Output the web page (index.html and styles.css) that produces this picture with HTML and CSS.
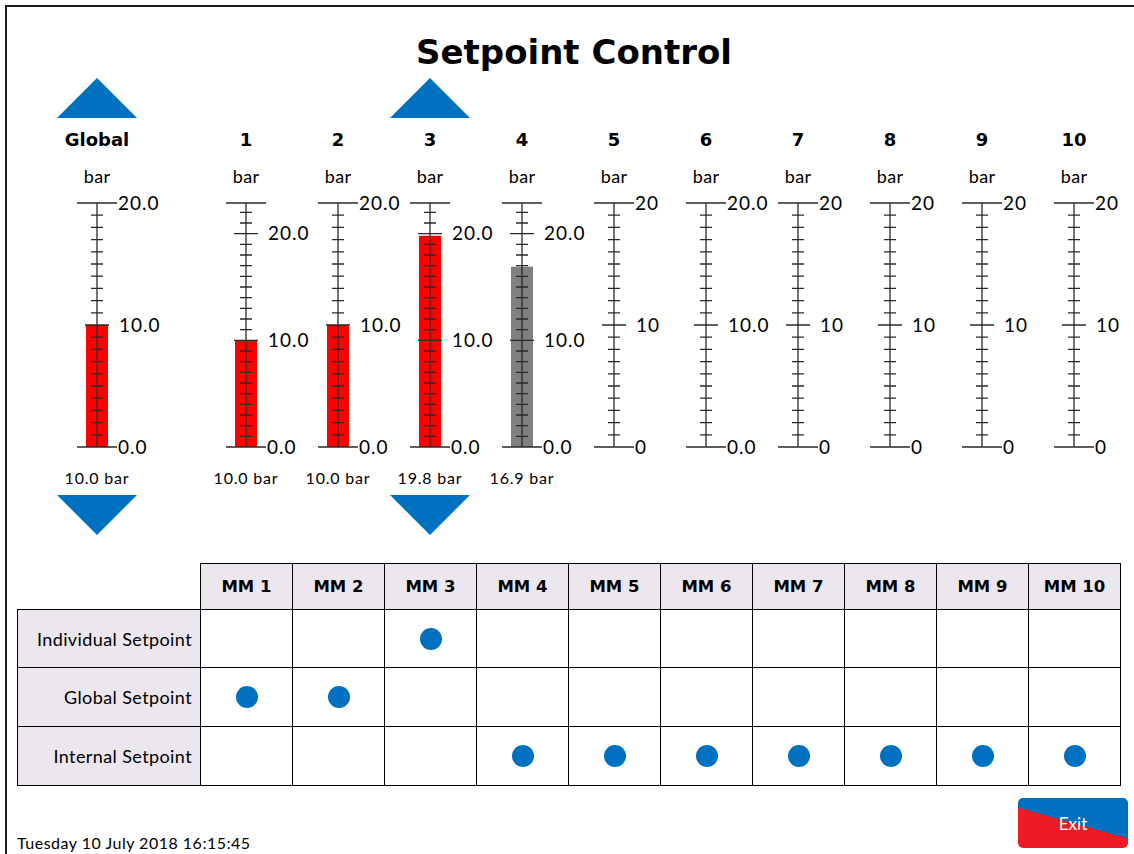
FILE: index.html
```html
<!DOCTYPE html>
<html lang="en">
<head>
<meta charset="utf-8">
<title>Setpoint Control</title>
<link rel="stylesheet" href="styles.css">
</head>
<body>
<svg class="defs" aria-hidden="true">
  <defs>
    <g id="scaleA" class="ticks">
      <path d="M40 247.8h12M40 235.6h12M40 223.4h12M40 211.2h12M40 199h12M40 186.8h12M40 174.6h12M40 162.4h12M40 150.2h12M40 125.8h12M40 113.6h12M40 101.4h12M40 89.2h12M40 77h12M40 64.8h12M40 52.6h12M40 40.4h12M40 28.2h12M34 138h24M26 16h40M26 260h40M46 16V260"/>
    </g>
    <g id="scaleB" class="ticks">
      <path d="M40 249.33h12M40 238.67h12M40 228h12M40 217.33h12M40 206.67h12M40 196h12M40 185.33h12M40 174.67h12M40 164h12M40 142.67h12M40 132h12M40 121.33h12M40 110.67h12M40 100h12M40 89.33h12M40 78.67h12M40 68h12M40 57.33h12M40 36h12M40 25.33h12M34 153.33h24M34 46.67h24M26 16h40M26 260h40M46 16V260"/>
    </g>
  </defs>
</svg>
<div class="screen">
  <h1 class="title">Setpoint Control</h1>

  <div class="gauges">
    <div class="gauge global">
      <div class="slot"><div class="tri-up"></div></div>
      <div class="name">Global</div>
      <div class="unit">bar</div>
      <svg class="scale" viewBox="0 0 92 272"><rect class="bar red" x="35" y="138" width="22" height="122"/><use href="#scaleA"/><text class="lbl" x="67" y="15">20.0</text><text class="lbl" x="68" y="137">10.0</text><text class="lbl" x="67" y="259">0.0</text></svg>
      <div class="readout">10.0 bar</div>
      <div class="slot down"><div class="tri-down"></div></div>
    </div>
    <div class="gauge">
      <div class="slot"></div>
      <div class="name">1</div>
      <div class="unit">bar</div>
      <svg class="scale" viewBox="0 0 92 272"><rect class="bar red" x="35" y="153.33" width="22" height="106.67"/><use href="#scaleB"/><text class="lbl" x="68" y="45.67">20.0</text><text class="lbl" x="68" y="152.33">10.0</text><text class="lbl" x="67" y="259">0.0</text></svg>
      <div class="readout">10.0 bar</div>
      <div class="slot down"></div>
    </div>
    <div class="gauge">
      <div class="slot"></div>
      <div class="name">2</div>
      <div class="unit">bar</div>
      <svg class="scale" viewBox="0 0 92 272"><rect class="bar red" x="35" y="138" width="22" height="122"/><use href="#scaleA"/><text class="lbl" x="67" y="15">20.0</text><text class="lbl" x="68" y="137">10.0</text><text class="lbl" x="67" y="259">0.0</text></svg>
      <div class="readout">10.0 bar</div>
      <div class="slot down"></div>
    </div>
    <div class="gauge">
      <div class="slot"><div class="tri-up"></div></div>
      <div class="name">3</div>
      <div class="unit">bar</div>
      <svg class="scale" viewBox="0 0 92 272"><rect class="bar red" x="35" y="48.8" width="22" height="211.2"/><use href="#scaleB"/><text class="lbl" x="68" y="45.67">20.0</text><text class="lbl" x="68" y="152.33">10.0</text><text class="lbl" x="67" y="259">0.0</text></svg>
      <div class="readout">19.8 bar</div>
      <div class="slot down"><div class="tri-down"></div></div>
    </div>
    <div class="gauge">
      <div class="slot"></div>
      <div class="name">4</div>
      <div class="unit">bar</div>
      <svg class="scale" viewBox="0 0 92 272"><rect class="bar grey" x="35" y="79.7" width="22" height="180.3"/><use href="#scaleB"/><text class="lbl" x="68" y="45.67">20.0</text><text class="lbl" x="68" y="152.33">10.0</text><text class="lbl" x="67" y="259">0.0</text></svg>
      <div class="readout">16.9 bar</div>
      <div class="slot down"></div>
    </div>
    <div class="gauge">
      <div class="slot"></div>
      <div class="name">5</div>
      <div class="unit">bar</div>
      <svg class="scale" viewBox="0 0 92 272"><use href="#scaleA"/><text class="lbl" x="67" y="15">20</text><text class="lbl" x="68" y="137">10</text><text class="lbl" x="67" y="259">0</text></svg>
      <div class="readout"></div>
      <div class="slot down"></div>
    </div>
    <div class="gauge">
      <div class="slot"></div>
      <div class="name">6</div>
      <div class="unit">bar</div>
      <svg class="scale" viewBox="0 0 92 272"><use href="#scaleA"/><text class="lbl" x="67" y="15">20.0</text><text class="lbl" x="68" y="137">10.0</text><text class="lbl" x="67" y="259">0.0</text></svg>
      <div class="readout"></div>
      <div class="slot down"></div>
    </div>
    <div class="gauge">
      <div class="slot"></div>
      <div class="name">7</div>
      <div class="unit">bar</div>
      <svg class="scale" viewBox="0 0 92 272"><use href="#scaleA"/><text class="lbl" x="67" y="15">20</text><text class="lbl" x="68" y="137">10</text><text class="lbl" x="67" y="259">0</text></svg>
      <div class="readout"></div>
      <div class="slot down"></div>
    </div>
    <div class="gauge">
      <div class="slot"></div>
      <div class="name">8</div>
      <div class="unit">bar</div>
      <svg class="scale" viewBox="0 0 92 272"><use href="#scaleA"/><text class="lbl" x="67" y="15">20</text><text class="lbl" x="68" y="137">10</text><text class="lbl" x="67" y="259">0</text></svg>
      <div class="readout"></div>
      <div class="slot down"></div>
    </div>
    <div class="gauge">
      <div class="slot"></div>
      <div class="name">9</div>
      <div class="unit">bar</div>
      <svg class="scale" viewBox="0 0 92 272"><use href="#scaleA"/><text class="lbl" x="67" y="15">20</text><text class="lbl" x="68" y="137">10</text><text class="lbl" x="67" y="259">0</text></svg>
      <div class="readout"></div>
      <div class="slot down"></div>
    </div>
    <div class="gauge">
      <div class="slot"></div>
      <div class="name">10</div>
      <div class="unit">bar</div>
      <svg class="scale" viewBox="0 0 92 272"><use href="#scaleA"/><text class="lbl" x="67" y="15">20</text><text class="lbl" x="68" y="137">10</text><text class="lbl" x="67" y="259">0</text></svg>
      <div class="readout"></div>
      <div class="slot down"></div>
    </div>
  </div>

  <table class="matrix">
    <colgroup>
      <col class="c-label"><col class="c-mm"><col class="c-mm"><col class="c-mm"><col class="c-mm"><col class="c-mm"><col class="c-mm"><col class="c-mm"><col class="c-mm"><col class="c-mm"><col class="c-mm">
    </colgroup>
    <thead>
      <tr>
        <th class="corner"></th>
        <th>MM 1</th><th>MM 2</th><th>MM 3</th><th>MM 4</th><th>MM 5</th><th>MM 6</th><th>MM 7</th><th>MM 8</th><th>MM 9</th><th>MM 10</th>
      </tr>
    </thead>
    <tbody>
      <tr class="r1">
        <td class="rowlabel">Individual Setpoint</td>
        <td></td><td></td><td><span class="dot"></span></td><td></td><td></td><td></td><td></td><td></td><td></td><td></td>
      </tr>
      <tr class="r2">
        <td class="rowlabel">Global Setpoint</td>
        <td><span class="dot"></span></td><td><span class="dot"></span></td><td></td><td></td><td></td><td></td><td></td><td></td><td></td><td></td>
      </tr>
      <tr class="r3">
        <td class="rowlabel">Internal Setpoint</td>
        <td></td><td></td><td></td><td><span class="dot"></span></td><td><span class="dot"></span></td><td><span class="dot"></span></td><td><span class="dot"></span></td><td><span class="dot"></span></td><td><span class="dot"></span></td><td><span class="dot"></span></td>
      </tr>
    </tbody>
  </table>

  <div class="footer">
    <div class="date">Tuesday 10 July 2018 16:15:45</div>
    <button class="exit" type="button">Exit</button>
  </div>
</div>
</body>
</html>
```
FILE: styles.css
```css
* { box-sizing: border-box; }
html, body { margin: 0; padding: 0; background: #fff; }
body {
  font-family: Lato, "Liberation Sans", sans-serif;
  color: #000;
  overflow: hidden;
}

.defs { position: absolute; width: 0; height: 0; overflow: hidden; }

.screen {
  margin: 5px 0 0 5px;
  height: 849px;
  border-left: 2px solid #1b1b1b;
  border-top: 2px solid #1b1b1b;
  padding-top: 22px;
}

.title {
  margin: 0;
  padding-left: 7px;
  text-align: center;
  font-family: "DejaVu Sans", sans-serif;
  font-weight: bold;
  font-size: 34px;
  line-height: 46px;
  height: 46px;
}

/* gauges */
.gauges {
  display: flex;
  margin-top: 3px;
  padding-left: 44px;
}
.gauge {
  width: 92px;
  flex: 0 0 92px;
  display: flex;
  flex-direction: column;
  align-items: center;
}
.gauge.global { margin-right: 57px; }

.slot { width: 80px; height: 40px; }
.slot.down { margin-top: 7px; }
.tri-up {
  width: 0; height: 0;
  border-left: 40px solid transparent;
  border-right: 40px solid transparent;
  border-bottom: 40px solid #0070c0;
}
.tri-down {
  width: 0; height: 0;
  border-left: 40px solid transparent;
  border-right: 40px solid transparent;
  border-top: 40px solid #0070c0;
}

.name {
  margin-top: 10px;
  height: 24px;
  line-height: 24px;
  font-family: "DejaVu Sans", sans-serif;
  font-weight: bold;
  font-size: 18px;
}
.unit {
  margin-top: 14px;
  height: 20px;
  line-height: 20px;
  font-size: 18px;
  letter-spacing: 0.3px;
}
.scale {
  display: block;
  margin-top: 1px;
  width: 92px;
  height: 272px;
  overflow: visible;
}
.ticks path {
  fill: none;
  stroke: #2a2a2a;
  stroke-width: 1.3;
}
.bar.red { fill: #ff0000; }
.bar.grey { fill: #808080; }
.lbl {
  font-family: Lato, "Liberation Sans", sans-serif;
  font-size: 19px;
  letter-spacing: 1px;
  dominant-baseline: central;
  fill: #000;
}
.readout {
  margin-top: 9px;
  height: 20px;
  line-height: 20px;
  font-size: 16px;
  letter-spacing: 0.8px;
  white-space: nowrap;
}

/* matrix */
.matrix {
  margin: 28px 0 0 10px;
  border-collapse: collapse;
  table-layout: fixed;
  width: 1103px;
}
.c-label { width: 183px; }
.c-mm { width: 92px; }
.matrix th, .matrix td {
  border: 1px solid #000;
  padding: 0;
  text-align: center;
  vertical-align: middle;
}
.matrix th {
  height: 46px;
  background: #ece6ee;
  font-family: "DejaVu Sans", sans-serif;
  font-weight: bold;
  font-size: 16.5px;
}
.matrix th.corner { border: none; background: none; }
.matrix .r1 td { height: 58px; }
.matrix .r2 td, .matrix .r3 td { height: 59px; }
.matrix td.rowlabel {
  background: #ece6ee;
  text-align: right;
  padding-right: 8px;
  font-size: 18px;
  letter-spacing: 0.4px;
}
.dot {
  display: block;
  width: 22px;
  height: 22px;
  margin: 0 auto;
  border-radius: 50%;
  background: #0070c0;
}

/* footer */
.footer {
  display: flex;
  justify-content: space-between;
  align-items: flex-end;
  margin-top: 12px;
  padding-left: 10px;
  padding-right: 6px;
}
.date {
  font-size: 16px;
  line-height: 18px;
  letter-spacing: 0.5px;
  margin-bottom: -4px;
}
.exit {
  width: 110px;
  height: 50px;
  padding: 0;
  border: none;
  border-radius: 5px;
  background: linear-gradient(195.7deg, #0070c0 50%, #ed1c24 50%);
  color: #fff;
  font-family: Lato, "Liberation Sans", sans-serif;
  font-size: 17px;
  display: flex;
  align-items: center;
  justify-content: center;
}
```
